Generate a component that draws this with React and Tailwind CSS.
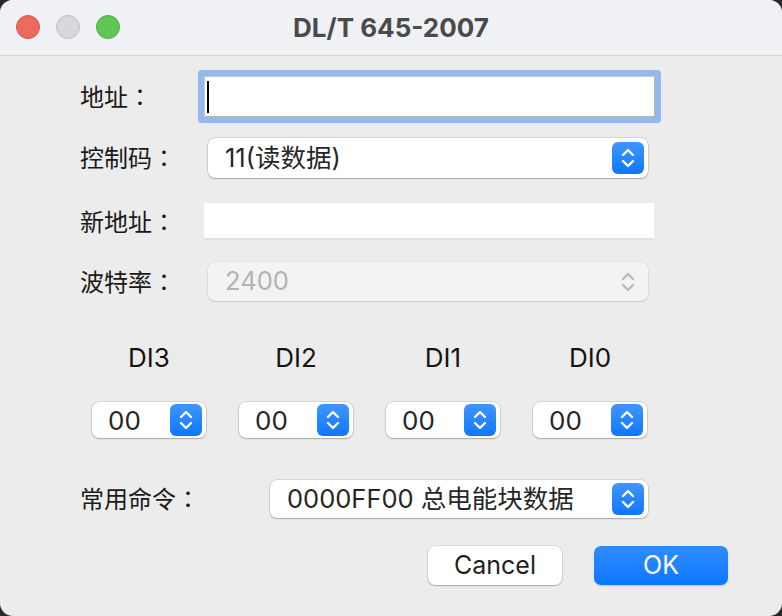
import React from "react";

const FONT = { fontFamily: 'Inter, "Noto Sans CJK SC", sans-serif' };

function Chevrons({ color = "white", w = 2.4 }) {
  return (
    <svg width="32" height="32" viewBox="0 0 32 32" fill="none">
      <path d="M11 13 L16 8 L21 13" stroke={color} strokeWidth={w} strokeLinecap="round" strokeLinejoin="round" />
      <path d="M11 19 L16 24 L21 19" stroke={color} strokeWidth={w} strokeLinecap="round" strokeLinejoin="round" />
    </svg>
  );
}

function Label({ text, className = "" }) {
  return (
    <div className={`text-[24px] text-[#1a1a1a] whitespace-nowrap ${className}`}>
      {text}
      <span className="font-['Noto_Sans_CJK_TC',sans-serif]">：</span>
    </div>
  );
}

function Select({ text, className = "", textClass = "pl-[17px] text-[25.5px]" }) {
  return (
    <div
      className={`flex items-center justify-between bg-white rounded-[7px] shadow-[0_0_0_0.5px_rgba(0,0,0,0.18),0_1px_1.5px_rgba(0,0,0,0.22)] ${className}`}
    >
      <span className={`text-[#262626] whitespace-nowrap ${textClass}`}>{text}</span>
      <div className="w-[32px] h-[32px] mr-[4px] rounded-[6px] bg-gradient-to-b from-[#3d95ff] to-[#0a77ff] flex items-center justify-center shrink-0">
        <Chevrons />
      </div>
    </div>
  );
}

export default function App() {
  return (
    <div className="w-[782px] h-[616px] bg-[#2a2a2a]" style={FONT}>
      <div className="w-full h-full bg-[#ececec] rounded-[13px] overflow-hidden flex flex-col">
        {/* Title bar */}
        <div className="h-[56px] shrink-0 bg-[#eff1f5] border-b border-[#d2d3d6] relative flex items-center justify-center">
          <div className="absolute left-[16px] top-[15px] flex gap-[16px]">
            <div className="w-[24px] h-[24px] rounded-full bg-[#ee6a5f] border border-[#d9564c]" />
            <div className="w-[24px] h-[24px] rounded-full bg-[#d6d8db] border border-[#bdbfc2]" />
            <div className="w-[24px] h-[24px] rounded-full bg-[#61c554] border border-[#4fae43]" />
          </div>
          <span className="text-[26px] font-bold text-[#4a4a4a]">DL/T 645-2007</span>
        </div>

        {/* Body */}
        <div className="flex flex-col text-[22px] text-[#1c1c1c]">
          {/* Row 1 */}
          <div className="mt-[20px] h-[41px] flex items-center pl-[80px]">
            <Label text="地址" className="w-[124px]" />
            <div className="w-[451px] h-[41px] bg-white rounded-[1px] shadow-[0_0_0_6px_#93b9ef] border-t border-l border-[#c8c8c8] border-b-[1.5px] border-b-[#b5b5b5] border-r border-r-[#b5b5b5] flex items-center pl-[2px]">
              <div className="w-[2px] h-[32px] bg-black" />
            </div>
          </div>

          {/* Row 2 */}
          <div className="mt-[21px] h-[40px] flex items-center pl-[80px]">
            <Label text="控制码" className="w-[128px]" />
            <Select text="11(读数据)" className="w-[440px] h-[40px]" />
          </div>

          {/* Row 3 */}
          <div className="mt-[25px] h-[37px] flex items-center pl-[80px]">
            <Label text="新地址" className="w-[124px]" />
            <div className="w-[450px] h-[37px] bg-white border-b-2 border-[#e2e2e2]" />
          </div>

          {/* Row 4 */}
          <div className="mt-[22px] h-[39px] flex items-center pl-[80px]">
            <Label text="波特率" className="w-[128px]" />
            <div className="w-[440px] h-[39px] rounded-[7px] bg-[#f3f3f3] shadow-[0_0_0_0.5px_rgba(0,0,0,0.08),0_1px_1.5px_rgba(0,0,0,0.1)] flex items-center justify-between">
              <span className="pl-[17px] text-[25.5px] text-[#b3b3b3]">2400</span>
              <div className="mr-[4px] w-[32px] h-[32px] flex items-center justify-center">
                <Chevrons color="#b8b8b8" w={2.2} />
              </div>
            </div>
          </div>

          {/* DI labels + selects */}
          <div className="mt-[41px] pl-[92px] grid grid-cols-[114px_114px_114px_114px] gap-x-[33px]">
            {["DI3", "DI2", "DI1", "DI0"].map((d) => (
              <div key={d} className="h-[30px] flex items-center justify-center text-[26px] text-[#141414]">
                {d}
              </div>
            ))}
            {["DI3", "DI2", "DI1", "DI0"].map((d) => (
              <div key={d + "s"} className="mt-[30px]">
                <Select text="00" className="w-[114px] h-[36px]" textClass="pl-[16px] text-[26px]" />
              </div>
            ))}
          </div>

          {/* Common command */}
          <div className="mt-[42px] h-[38px] flex items-center pl-[80px]">
            <Label text="常用命令" className="w-[190px]" />
            <Select text="0000FF00 总电能块数据" className="w-[378px] h-[38px]" />
          </div>

          {/* Buttons */}
          <div className="mt-[28px] flex justify-end pr-[54px] gap-[32px]">
            <button className="w-[134px] h-[39px] rounded-[7px] bg-white text-[#1f1f1f] text-[25px] shadow-[0_0_0_0.5px_rgba(0,0,0,0.15),0_1px_1.5px_rgba(0,0,0,0.22)]">
              Cancel
            </button>
            <button className="w-[134px] h-[39px] rounded-[7px] bg-gradient-to-b from-[#2f8cff] to-[#0a77ff] text-white text-[25px] shadow-[0_1px_1.5px_rgba(0,0,0,0.18)]">
              OK
            </button>
          </div>
        </div>
      </div>
    </div>
  );
}
